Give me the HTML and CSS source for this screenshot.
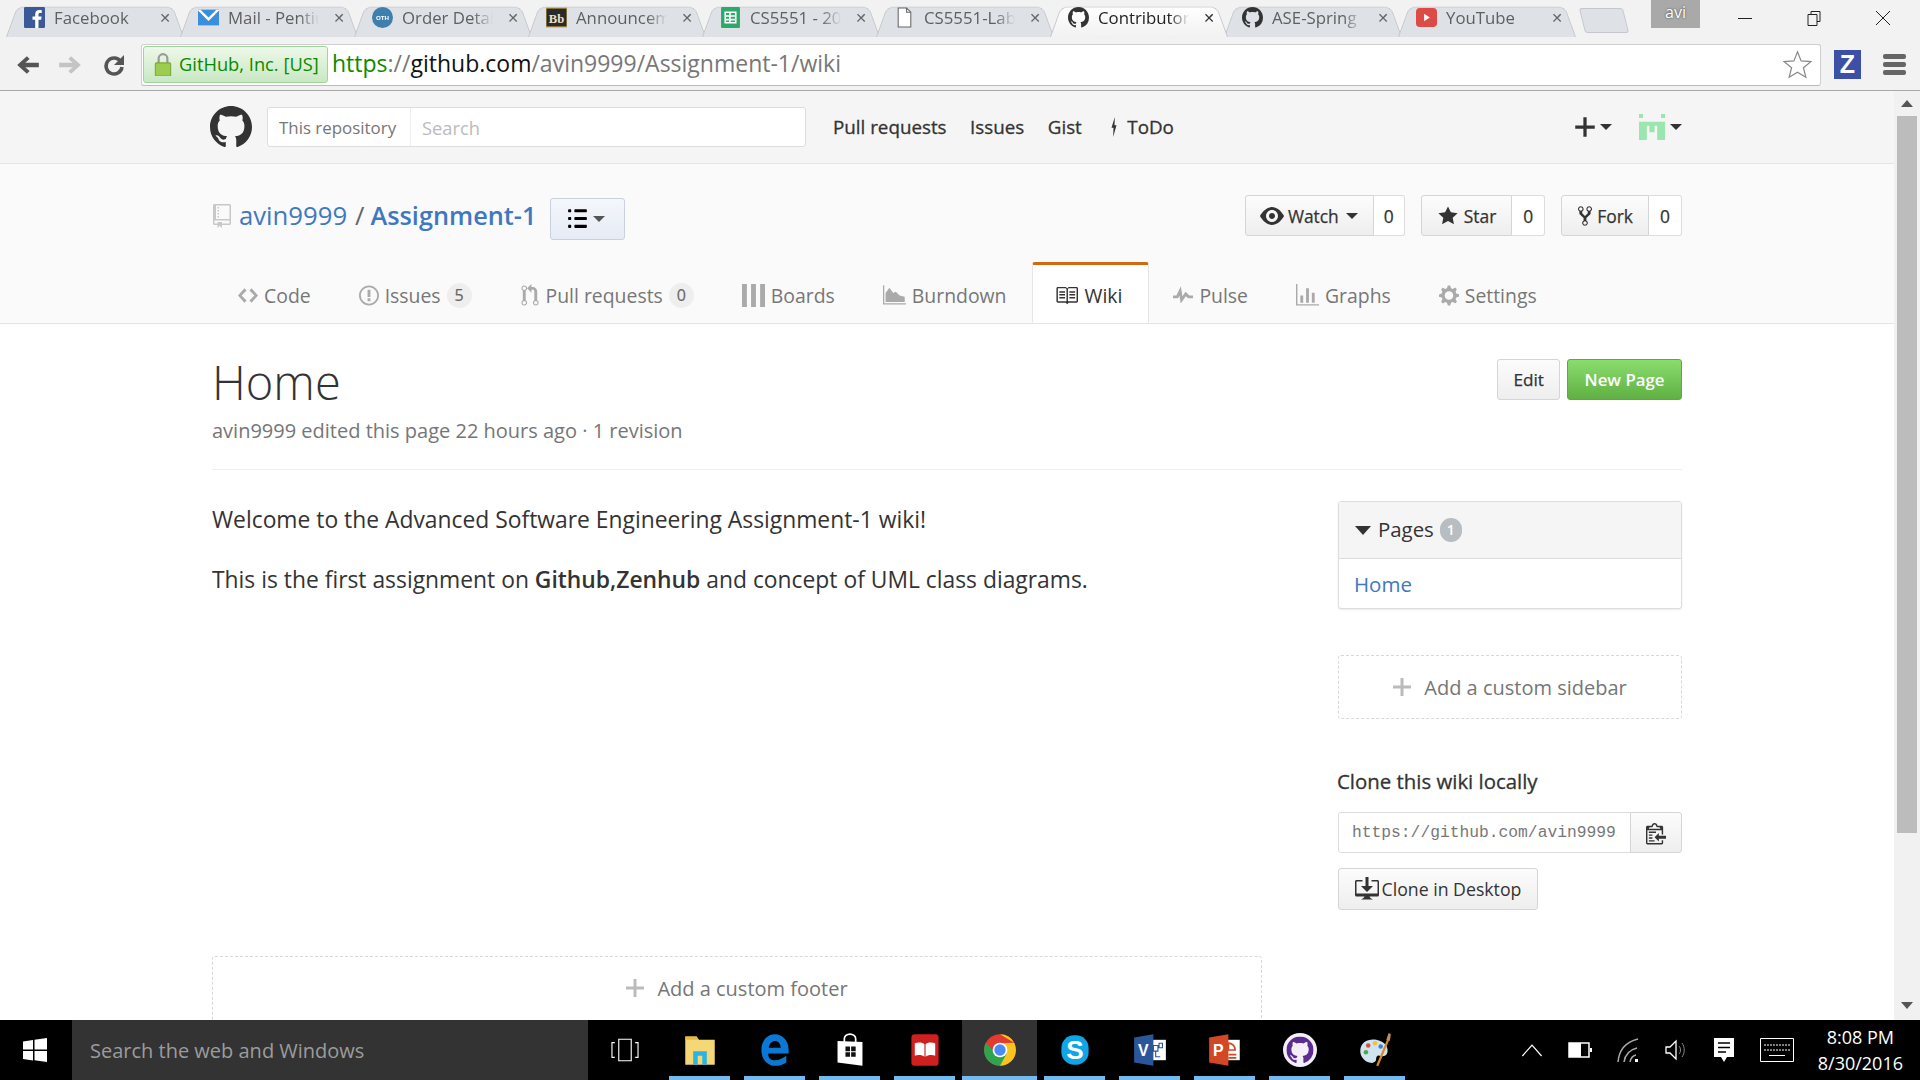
FILE: index.html
```html
<!DOCTYPE html>
<html lang="en">
<head>
<meta charset="utf-8">
<title>Home · avin9999/Assignment-1 Wiki</title>
<link rel="stylesheet" href="styles.css">
</head>
<body>
<svg class="defs" aria-hidden="true">
  <symbol id="i-mark" viewBox="0 0 16 16"><path d="M8 0C3.58 0 0 3.58 0 8c0 3.54 2.29 6.53 5.47 7.59.4.07.55-.17.55-.38 0-.19-.01-.82-.01-1.49-2.01.37-2.53-.49-2.69-.94-.09-.23-.48-.94-.82-1.13-.28-.15-.68-.52-.01-.53.63-.01 1.08.58 1.23.82.72 1.21 1.87.87 2.33.66.07-.52.28-.87.51-1.07-1.78-.2-3.64-.89-3.64-3.95 0-.87.31-1.59.82-2.15-.08-.2-.36-1.02.08-2.12 0 0 .67-.21 2.2.82.64-.18 1.32-.27 2-.27.68 0 1.36.09 2 .27 1.53-1.04 2.2-.82 2.2-.82.44 1.1.16 1.92.08 2.12.51.56.82 1.27.82 2.15 0 3.07-1.87 3.75-3.65 3.95.29.25.54.73.54 1.48 0 1.07-.01 1.93-.01 2.2 0 .21.15.46.55.38A8.013 8.013 0 0016 8c0-4.42-3.58-8-8-8z"/></symbol>
  <symbol id="i-star" viewBox="0 0 14 16"><path d="M14 6l-4.9-.64L7 1 4.9 5.36 0 6l3.6 3.26L2.67 14 7 11.67 11.33 14l-.93-4.74L14 6z"/></symbol>
  <symbol id="i-eye" viewBox="0 0 16 16"><path d="M8.06 2C3 2 0 8 0 8s3 6 8.06 6C13 14 16 8 16 8s-3-6-7.94-6zM8 12c-2.2 0-4-1.78-4-4 0-2.2 1.8-4 4-4 2.22 0 4 1.8 4 4 0 2.22-1.78 4-4 4zm2-4c0 1.11-.89 2-2 2-1.11 0-2-.89-2-2 0-1.11.89-2 2-2 1.11 0 2 .89 2 2z"/></symbol>
  <symbol id="i-fork" viewBox="0 0 10 16"><path d="M8 1a1.993 1.993 0 00-1 3.72V6L5 8 3 6V4.72A1.993 1.993 0 002 1a1.993 1.993 0 00-1 3.72V6.5l3 3v1.78A1.993 1.993 0 005 15a1.993 1.993 0 001-3.72V9.5l3-3V4.72A1.993 1.993 0 008 1zM2 4.2C1.34 4.2.8 3.65.8 3c0-.65.55-1.2 1.2-1.2.65 0 1.2.55 1.2 1.2 0 .65-.55 1.2-1.2 1.2zm3 10c-.66 0-1.2-.55-1.2-1.2 0-.65.55-1.2 1.2-1.2.65 0 1.2.55 1.2 1.2 0 .65-.55 1.2-1.2 1.2zm3-10c-.66 0-1.2-.55-1.2-1.2 0-.65.55-1.2 1.2-1.2.65 0 1.2.55 1.2 1.2 0 .65-.55 1.2-1.2 1.2z"/></symbol>
  <symbol id="i-repo" viewBox="0 0 12 16"><path d="M4 9H3V8h1v1zm0-3H3v1h1V6zm0-2H3v1h1V4zm0-2H3v1h1V2zm8-1v12c0 .55-.45 1-1 1H6v2l-1.5-1.5L3 16v-2H1c-.55 0-1-.45-1-1V1c0-.55.45-1 1-1h10c.55 0 1 .45 1 1zm-1 10H1v2h2v-1h3v1h5v-2zm0-10H2v9h9V1z"/></symbol>
  <symbol id="i-code" viewBox="0 0 14 16"><path d="M9.5 3L8 4.5 11.5 8 8 11.5 9.5 13 14 8 9.5 3zm-5 0L0 8l4.5 5L6 11.5 2.5 8 6 4.5 4.5 3z"/></symbol>
  <symbol id="i-issue" viewBox="0 0 14 16"><path d="M7 2.3c3.14 0 5.7 2.56 5.7 5.7s-2.56 5.7-5.7 5.7A5.71 5.71 0 011.3 8c0-3.14 2.56-5.7 5.7-5.7zM7 1C3.14 1 0 4.14 0 8s3.14 7 7 7 7-3.14 7-7-3.14-7-7-7zm1 3H6v5h2V4zm0 6H6v2h2v-2z"/></symbol>
  <symbol id="i-pr" viewBox="0 0 12 16"><path d="M11 11.28V5c-.03-.78-.34-1.47-.94-2.06C9.46 2.35 8.78 2.03 8 2H7V0L4 3l3 3V4h1c.27.02.48.11.69.31.21.2.3.42.31.69v6.28A1.993 1.993 0 0010 15a1.993 1.993 0 001-3.72zm-1 2.92c-.66 0-1.2-.55-1.2-1.2 0-.65.55-1.2 1.2-1.2.65 0 1.2.55 1.2 1.2 0 .65-.55 1.2-1.2 1.2zM4 3c0-1.11-.89-2-2-2a1.993 1.993 0 00-1 3.72v6.56A1.993 1.993 0 002 15a1.993 1.993 0 001-3.72V4.72c.59-.34 1-.98 1-1.72zm-.8 10c0 .66-.55 1.2-1.2 1.2-.65 0-1.2-.55-1.2-1.2 0-.65.55-1.2 1.2-1.2.65 0 1.2.55 1.2 1.2zM2 4.2C1.34 4.2.8 3.65.8 3c0-.65.55-1.2 1.2-1.2.65 0 1.2.55 1.2 1.2 0 .65-.55 1.2-1.2 1.2z"/></symbol>
  <symbol id="i-boards" viewBox="0 0 16 16"><path d="M0 0h3.4v16H0zM6.3 0h3.4v16H6.3zM12.6 0H16v16h-3.4z"/></symbol>
  <symbol id="i-burn" viewBox="0 0 18 16"><path d="M0 0h1v14h17v1H0z"/><path d="M2 13V6l3-4 3 4 2-1 3 3 4 1v4z"/></symbol>
  <symbol id="i-book" viewBox="0 0 16 16"><path d="M3 5h4v1H3V5zm0 3h4V7H3v1zm0 2h4V9H3v1zm11-5h-4v1h4V5zm0 2h-4v1h4V7zm0 2h-4v1h4V9zm2-6v9c0 .55-.45 1-1 1H9.5l-1 1-1-1H2c-.55 0-1-.45-1-1V3c0-.55.45-1 1-1h5.5l1 1 1-1H15c.55 0 1 .45 1 1zm-8 .5L7.5 3H2v9h6V3.5zm7-.5H9.5l-.5.5V12h6V3z"/></symbol>
  <symbol id="i-pulse" viewBox="0 0 14 16"><path d="M11.5 8L8.8 5.4 6.6 8.5 5.5 1.6 2.38 8H0v2h3.6l.9-1.8.9 5.4L9 8.5l1.6 1.5H14V8h-2.5z"/></symbol>
  <symbol id="i-graph" viewBox="0 0 16 16"><path d="M16 14v1H0V0h1v14h15zM5 13H3V8h2v5zm4 0H7V3h2v10zm4 0h-2V6h2v7z"/></symbol>
  <symbol id="i-gear" viewBox="0 0 14 16"><path d="M14 8.77v-1.6l-1.94-.64-.45-1.09.88-1.84-1.13-1.13-1.81.91-1.09-.45-.69-1.92h-1.6l-.63 1.94-1.11.45-1.84-.88-1.13 1.13.91 1.81-.45 1.09L0 7.23v1.59l1.94.64.45 1.09-.88 1.84 1.13 1.13 1.81-.91 1.09.45.69 1.92h1.59l.63-1.94 1.11-.45 1.84.88 1.13-1.13-.92-1.81.47-1.09L14 8.75v.02zM7 11c-1.66 0-3-1.34-3-3s1.34-3 3-3 3 1.34 3 3-1.34 3-3 3z"/></symbol>
  <symbol id="i-desk" viewBox="0 0 16 16"><path d="M4 6h3V0h2v6h3l-4 4-4-4zm11-4h-4v1h4v8H1V3h4V2H1c-.55 0-1 .45-1 1v9c0 .55.45 1 1 1h5.34c-.25.61-.86 1.39-2.34 2h8c-1.48-.61-2.09-1.39-2.34-2H15c.55 0 1-.45 1-1V3c0-.55-.45-1-1-1z"/></symbol>
  <symbol id="i-clip" viewBox="0 0 14 16"><path d="M2 13h4v1H2v-1zm5-6H2v1h5V7zm2 3V8l-3 3 3 3v-2h5v-2H9zM4.5 9H2v1h2.5V9zM2 12h2.5v-1H2v1zm9 1h1v2c-.02.28-.11.52-.3.7-.19.18-.42.28-.7.3H1c-.55 0-1-.45-1-1V4c0-.55.45-1 1-1h3c0-1.11.89-2 2-2 1.11 0 2 .89 2 2h3c.55 0 1 .45 1 1v5h-1V6H1v9h10v-2zM2 5h8c0-.55-.45-1-1-1H8c-.55 0-1-.45-1-1s-.45-1-1-1-1 .45-1 1-.45 1-1 1H3c-.55 0-1 .45-1 1z"/></symbol>
  <symbol id="i-plus" viewBox="0 0 12 16"><path d="M12 9H7v5H5V9H0V7h5V2h2v5h5v2z"/></symbol>
  <symbol id="i-list" viewBox="0 0 12 16"><path d="M2 13c0 .59 0 1-.59 1H.59C0 14 0 13.59 0 13c0-.59 0-1 .59-1h.81c.59 0 .59.41.59 1H2zm2.59-9h6.81c.59 0 .59-.41.59-1 0-.59 0-1-.59-1H4.59C4 2 4 2.41 4 3c0 .59 0 1 .59 1zM1.41 7H.59C0 7 0 7.41 0 8c0 .59 0 1 .59 1h.81c.59 0 .59-.41.59-1 0-.59 0-1-.59-1h.01zm0-5H.59C0 2 0 2.41 0 3c0 .59 0 1 .59 1h.81c.59 0 .59-.41.59-1 0-.59 0-1-.59-1h.01zm10 5H4.59C4 7 4 7.41 4 8c0 .59 0 1 .59 1h6.81c.59 0 .59-.41.59-1 0-.59 0-1-.59-1h.01zm0 5H4.59C4 12 4 12.41 4 13c0 .59 0 1 .59 1h6.81c.59 0 .59-.41.59-1 0-.59 0-1-.59-1h.01z"/></symbol>
  <symbol id="i-bolt" viewBox="0 0 8 24"><path d="M5 0L1 13h2.4L3 24l4-14H4.6z"/></symbol>
</svg>

<div class="strip">
  <div class="tab">
    <svg class="favicon" viewBox="0 0 18 18"><rect width="18" height="18" rx="1" fill="#3b5998"/><path fill="#fff" d="M12.4 18v-7h2.3l.4-2.8h-2.7V6.5c0-.8.2-1.3 1.4-1.3h1.4V2.7c-.3 0-1.1-.1-2.1-.1-2.1 0-3.5 1.3-3.5 3.6v2H7.300v2.800h2.300v7z"/></svg>
    <span class="tab-title">Facebook</span><span class="tab-x">✕</span>
  </div>
  <div class="tab">
    <svg class="favicon" viewBox="0 0 24 18"><rect width="24" height="18" fill="#3a8fdc"/><path fill="#fff" d="M0 0h3l9 9 9-9h3v1L12 13 0 1z"/></svg>
    <span class="tab-title">Mail - Pentium</span><span class="tab-x">✕</span>
  </div>
  <div class="tab">
    <svg class="favicon" viewBox="0 0 22 22"><circle cx="11" cy="11" r="11" fill="#3f7fae"/><text x="11" y="13.500" font-size="6.500" font-weight="700" text-anchor="middle" fill="#fff" font-family="Liberation Sans">OTH</text></svg>
    <span class="tab-title">Order Details</span><span class="tab-x">✕</span>
  </div>
  <div class="tab">
    <svg class="favicon" viewBox="0 0 20 18"><rect width="20" height="18" fill="#2a2a2a" stroke="#c7a34a"/><text x="10" y="14" font-size="12" font-weight="700" text-anchor="middle" fill="#e8e0c8" font-family="Liberation Serif">Bb</text></svg>
    <span class="tab-title">Announcements</span><span class="tab-x">✕</span>
  </div>
  <div class="tab">
    <svg class="favicon" viewBox="0 0 18 20"><rect width="18" height="20" rx="1" fill="#2fa86c"/><path fill="none" stroke="#fff" stroke-width="1.500" d="M4 5h10v10H4zM4 8.500h10M4 12h10M8.500 5v10"/></svg>
    <span class="tab-title">CS5551 - 2016</span><span class="tab-x">✕</span>
  </div>
  <div class="tab">
    <svg class="favicon" viewBox="0 0 16 20"><path fill="#fff" stroke="#666" d="M2 1h8l4 4v14H2z"/><path fill="none" stroke="#666" d="M10 1v4h4"/></svg>
    <span class="tab-title">CS5551-Lab</span><span class="tab-x">✕</span>
  </div>
  <div class="tab tab-active">
    <svg class="favicon favicon-mark"><use href="#i-mark"/></svg>
    <span class="tab-title">Contributors</span><span class="tab-x">✕</span>
  </div>
  <div class="tab">
    <svg class="favicon favicon-mark"><use href="#i-mark"/></svg>
    <span class="tab-title">ASE-Spring</span><span class="tab-x">✕</span>
  </div>
  <div class="tab">
    <svg class="favicon" viewBox="0 0 22 20"><rect width="22" height="20" rx="4" fill="#dd4b47"/><path fill="#fff" d="M8.500 6v8l6-4z"/></svg>
    <span class="tab-title">YouTube</span><span class="tab-x">✕</span>
  </div>
  <div class="new-tab"></div>
  <div class="win-controls">
    <span class="user-chip">avi</span>
    <span class="win-btn"><svg class="win-ico" viewBox="0 0 16 16"><path stroke="#222" d="M1 8.500h14"/></svg></span>
    <span class="win-btn"><svg class="win-ico" viewBox="0 0 16 16"><path fill="none" stroke="#222" d="M2 4.500h9v11H2zM5 4V1.500h9v10h-3"/></svg></span>
    <span class="win-btn"><svg class="win-ico" viewBox="0 0 16 16"><path stroke="#222" d="M1 1l14 14M15 1L1 15"/></svg></span>
  </div>
</div>

<div class="toolbar">
  <svg class="nav-arrow" viewBox="0 0 24 24"><path fill="#555" d="M11 4l2.500 2.500L9.500 10H22v4H9.500l4 3.500L11 20 2 12z"/></svg>
  <svg class="nav-arrow" viewBox="0 0 24 24"><path fill="#c4c4c4" d="M13 4l-2.500 2.500 4 3.500H2v4h12.500l-4 3.500L13 20l9-8z"/></svg>
  <svg class="nav-reload" viewBox="0 0 24 24"><path fill="none" stroke="#555" stroke-width="3.500" d="M19 9a8 8 0 1 0 1 5"/><path fill="#555" d="M22 2v10H12z"/></svg>
  <div class="omnibox">
    <div class="ev-badge">
      <svg class="lock" viewBox="0 0 16 22"><path fill="none" stroke="#9a9a9a" stroke-width="2" d="M4 10V6a4 4 0 0 1 8 0v4"/><rect x="1" y="10" width="14" height="12" rx="1" fill="#9ccc50" stroke="#7da83a"/></svg>
      <span>GitHub, Inc. [US]</span>
    </div>
    <div class="url"><span class="url-scheme">https</span><span class="url-dim">://</span><span class="url-host">github.com</span><span class="url-dim">/avin9999/Assignment-1/wiki</span></div>
    <svg class="omni-star" viewBox="0 0 24 24"><path fill="#fff" stroke="#888" d="M12 1.500l3 7.500 8 .6-6.100 5.100 2 7.800L12 18.300l-6.900 4.200 2-7.800L1 9.600 9 9z"/></svg>
  </div>
  <div class="ext-z">Z</div>
  <div class="hamburger"><i></i><i></i><i></i></div>
</div>

<div class="viewport">
  <div class="page">
    <header class="gh-head">
      <div class="wrap gh-head-row">
        <svg class="gh-logo"><use href="#i-mark"/></svg>
        <div class="search">
          <span class="search-scope">This repository</span>
          <span class="search-input">Search</span>
        </div>
        <nav class="gh-nav">
          <a>Pull requests</a><a>Issues</a><a>Gist</a>
          <a class="gh-todo"><svg class="bolt"><use href="#i-bolt"/></svg>ToDo</a>
        </nav>
        <div class="gh-user">
          <span class="gh-user-item"><svg class="plus-ico"><use href="#i-plus"/></svg><i class="caret"></i></span>
          <span class="gh-user-item">
            <svg class="avatar" viewBox="0 0 10 10"><path fill="#9be5ae" d="M0 0h1.500v1.500H0zM8.500 0H10v1.500H8.500zM0 3h10v1.500H0zM0 3h3v7H0zM7 3h3v7H7zM4 3h2v4H4z"/></svg>
            <i class="caret"></i>
          </span>
        </div>
      </div>
    </header>

    <section class="repo-head">
      <div class="wrap">
        <div class="repo-top">
          <div class="repo-title">
            <svg class="repo-ico"><use href="#i-repo"/></svg>
            <a class="link">avin9999</a><span class="slash">/</span><a class="link repo-name">Assignment-1</a>
            <span class="list-btn"><svg class="list-ico"><use href="#i-list"/></svg><i class="caret caret-grey"></i></span>
          </div>
          <div class="repo-actions">
            <div class="btn-group"><span class="act act-watch"><svg class="act-ico act-eye"><use href="#i-eye"/></svg>Watch<i class="caret"></i></span><span class="count count-watch">0</span></div>
            <div class="btn-group"><span class="act"><svg class="act-ico"><use href="#i-star"/></svg>Star</span><span class="count">0</span></div>
            <div class="btn-group"><span class="act act-forkbtn"><svg class="act-ico act-fork"><use href="#i-fork"/></svg>Fork</span><span class="count">0</span></div>
          </div>
        </div>
        <nav class="rtabs">
          <a class="rtab"><svg class="rt-ico"><use href="#i-code"/></svg>Code</a>
          <a class="rtab"><svg class="rt-ico"><use href="#i-issue"/></svg>Issues<span class="counter">5</span></a>
          <a class="rtab"><svg class="rt-ico"><use href="#i-pr"/></svg>Pull requests<span class="counter">0</span></a>
          <a class="rtab"><svg class="rt-ico rt-wide"><use href="#i-boards"/></svg>Boards</a>
          <a class="rtab"><svg class="rt-ico rt-wide"><use href="#i-burn"/></svg>Burndown</a>
          <a class="rtab rtab-on"><svg class="rt-ico rt-wide"><use href="#i-book"/></svg>Wiki</a>
          <a class="rtab"><svg class="rt-ico"><use href="#i-pulse"/></svg>Pulse</a>
          <a class="rtab"><svg class="rt-ico rt-wide"><use href="#i-graph"/></svg>Graphs</a>
          <a class="rtab"><svg class="rt-ico"><use href="#i-gear"/></svg>Settings</a>
        </nav>
      </div>
    </section>

    <main class="wrap wiki">
      <div class="wiki-head">
        <div>
          <h1 class="wiki-title">Home</h1>
          <div class="wiki-meta">avin9999 edited this page 22 hours ago · 1 revision</div>
        </div>
        <div class="wiki-actions">
          <span class="btn">Edit</span>
          <span class="btn btn-green">New Page</span>
        </div>
      </div>
      <div class="wiki-grid">
        <article class="wiki-body">
          <p>Welcome to the Advanced Software Engineering Assignment-1 wiki!</p>
          <p>This is the first assignment on <strong>Github,Zenhub</strong> and concept of UML class diagrams.</p>
        </article>
        <aside class="wiki-side">
          <div class="pages-box">
            <div class="pages-head"><i class="caret caret-big"></i>Pages<span class="pages-num">1</span></div>
            <div class="pages-item"><a class="link">Home</a></div>
          </div>
          <div class="dashed dashed-side"><svg class="add-ico"><use href="#i-plus"/></svg>Add a custom sidebar</div>
          <h3 class="clone-title">Clone this wiki locally</h3>
          <div class="clone-field">
            <span class="clone-url"><span class="clone-text">https://github.com/avin9999/Assignment-1.wiki.git</span></span>
            <span class="clone-copy"><svg class="clip-ico"><use href="#i-clip"/></svg></span>
          </div>
          <span class="btn btn-desktop"><svg class="desk-ico"><use href="#i-desk"/></svg>Clone in Desktop</span>
        </aside>
      </div>
      <div class="dashed dashed-foot"><svg class="add-ico"><use href="#i-plus"/></svg>Add a custom footer</div>
    </main>
  </div>
  <div class="scrollbar">
    <i class="sb-up"></i>
    <i class="sb-thumb"></i>
    <i class="sb-down"></i>
  </div>
</div>

<footer class="taskbar">
  <div class="start">
    <svg class="start-ico" viewBox="0 0 24 24"><path fill="#fff" d="M0 3.500l10-1.500v9.500H0zM11.500 1.800L24 0v11.500H11.500zM0 13h10v9.500L0 21zM11.500 13H24v11l-12.500-1.800z"/></svg>
  </div>
  <div class="cortana">Search the web and Windows</div>
  <div class="tb-apps">
    <span class="tb-app"><svg class="tb-ico" viewBox="0 0 30 30"><path fill="none" stroke="#fff" d="M9.500 5.500h11v19h-11zM6 8.500H3.500v13H6M24 8.500h2.500v13H24"/></svg></span>
    <span class="tb-app tb-open"><svg class="tb-ico" viewBox="0 0 30 30"><path fill="#f6d776" d="M2 3h10l2 3h14v22H2z"/><path fill="#e8b93f" d="M2 3h10l2 3H2z"/><path fill="#2ab4e6" d="M9 16h12v12h-4v-8h-4v8H9z"/></svg></span>
    <span class="tb-app tb-open"><svg class="tb-ico" viewBox="0 0 30 30"><path fill="#0a78d4" d="M15 1C7 1 3 8 3 15c0 9 6 14 12 14 4 0 7-1 10-3v-6c-3 2-6 4-10 4s-6-2-6-6h18v-3C27 7 22 1 15 1zM9.500 13c.5-4 3-6 5.500-6s5 2 5 6z"/></svg></span>
    <span class="tb-app tb-open"><svg class="tb-ico" viewBox="0 0 30 30"><path fill="none" stroke="#fff" stroke-width="1.500" d="M10 8V5a5 4 0 0 1 10 0v3"/><path fill="#fff" d="M4 7l22 1v21L4 26z"/><path fill="#111" d="M11 12h4v4h-4zM16 12h4v4h-4zM11 17h4v4h-4zM16 17h4v4h-4z"/></svg></span>
    <span class="tb-app tb-open"><svg class="tb-ico" viewBox="0 0 30 30"><rect x="3" y="1" width="24" height="28" rx="3" fill="#cf1f1f"/><path fill="#fff" d="M6 9c3-1 7-1 8.500 1v11C13 19.500 9 19 6 20zM24 9c-3-1-7-1-8.500 1v11c1.500-1.500 5.500-2 8.500-1z"/></svg></span>
    <span class="tb-app tb-open tb-active"><svg class="tb-ico" viewBox="0 0 30 30"><circle cx="15" cy="15" r="14" fill="#e33b2e"/><path fill="#f7c51e" d="M15 1a14 14 0 0 1 12.500 7.500L15 9l-3 1 3 19A14 14 0 0 0 27.500 8.500z"/><path fill="#2fa44f" d="M2.500 8.500A14 14 0 0 0 15 29l6-11-10 0z"/><circle cx="15" cy="15" r="6.500" fill="#fff"/><circle cx="15" cy="15" r="5" fill="#4a8af4"/></svg></span>
    <span class="tb-app tb-open"><svg class="tb-ico" viewBox="0 0 30 30"><rect x="3" y="2" width="24" height="26" rx="11" fill="#10a5e6"/><text x="15" y="23" font-size="23" font-weight="700" text-anchor="middle" fill="#fff" font-family="Liberation Sans">S</text></svg></span>
    <span class="tb-app tb-open"><svg class="tb-ico" viewBox="0 0 30 30"><path fill="#fff" d="M16 6h13v18H16z"/><path fill="none" stroke="#2b579a" d="M18 11h4v5h-4zM23 9h3v4h-3zM20 16v5h4"/><path fill="#2b579a" d="M1 4l17-3v28L1 26z"/><text x="9" y="20" font-size="14" font-weight="700" text-anchor="middle" fill="#fff" font-family="Liberation Sans">V</text></svg></span>
    <span class="tb-app tb-open"><svg class="tb-ico" viewBox="0 0 30 30"><path fill="#fff" d="M15 6h13v18H15z"/><path fill="none" stroke="#d24726" stroke-width="1.500" d="M18 9v6h6a6 6 0 0 0-6-6zM18 19h7M18 22h7"/><path fill="#d24726" d="M1 4l17-3v28L1 26z"/><text x="9" y="20" font-size="14" font-weight="700" text-anchor="middle" fill="#fff" font-family="Liberation Sans">P</text></svg></span>
    <span class="tb-app tb-open"><svg class="tb-ico" viewBox="-2 -2 20 20"><circle cx="8" cy="8" r="10" fill="#f3eef8"/><use href="#i-mark" width="16" height="16" fill="#5c2d91"/></svg></span>
    <span class="tb-app tb-open"><svg class="tb-ico" viewBox="0 0 30 30"><path fill="#cfe4ef" d="M2 16C2 8 9 5 16 6c7 1 11 6 10 11-1 4-5 4-7 3-2-.6-3 1-3 3 0 3-3 4-6 3-4-1-8-5-8-10z"/><circle cx="9" cy="11" r="2" fill="#e04b3f"/><circle cx="15" cy="9" r="2" fill="#f2c230"/><circle cx="7" cy="17" r="2" fill="#4aa84f"/><circle cx="20" cy="12" r="2" fill="#3f7fd1"/><path stroke="#d98a24" stroke-width="2" d="M17 29l10-24"/><path fill="#b9935a" d="M25 6l2-6 2 1-1 6z"/></svg></span>
  </div>
  <div class="tray">
    <svg class="tray-ico tray-chev" viewBox="0 0 20 20"><path fill="none" stroke="#fff" d="M2 15l8-9 8 9"/></svg>
    <svg class="tray-ico" viewBox="0 0 24 20"><path fill="none" stroke="#fff" stroke-width="1.500" d="M1 3h20v14H1z"/><path fill="#fff" d="M1 3h12v14H1zM22 8h2v4h-2z"/></svg>
    <svg class="tray-ico" viewBox="0 0 24 24"><path fill="none" stroke="#aaa" stroke-width="1.500" d="M2 24C3 12 10 4 22 1M8 24c1-7 5-12 13-14M14 24c.5-3 2-6 6-7"/><path fill="#fff" d="M19 21h3v3h-3z"/></svg>
    <svg class="tray-ico" viewBox="0 0 24 24"><path fill="none" stroke="#fff" stroke-width="1.300" d="M2 9h4l6-6v18l-6-6H2z"/><path fill="none" stroke="#888" d="M15 8c2 2 2 6 0 8M18 5c3 4 3 10 0 14"/></svg>
    <svg class="tray-ico" viewBox="0 0 24 24"><path fill="#fff" d="M2 0h20v19h-7l-3 5-3-5H2z"/><path stroke="#000" stroke-width="1.500" d="M6 5h12M6 9.500h12M6 14h8"/></svg>
    <svg class="tray-ico tray-kb" viewBox="0 0 34 24"><path fill="none" stroke="#fff" d="M.5.500h33v23H.5z"/><path stroke="#fff" stroke-dasharray="2 1" d="M4 7h26M4 12h26"/><path stroke="#fff" d="M9 17.500h16"/></svg>
    <div class="clock"><span>8:08 PM</span><span>8/30/2016</span></div>
  </div>
</footer>
</body>
</html>
```

FILE: styles.css
```css
* { box-sizing: border-box; }
html, body { margin: 0; height: 1080px; overflow: hidden; }
body { display: flex; flex-direction: column; font-family: "Open Sans", "Noto Sans", sans-serif; color: #333; background: #fff; }
.defs { display: none; }
a { color: inherit; text-decoration: none; }

/* browser tab strip */
.strip { display: flex; flex: none; height: 37px; background: #f2f2f2; padding-left: 8px; position: relative; z-index: 1; }
.tab { position: relative; flex: none; width: 174px; height: 37px; display: flex; align-items: center; padding: 0 9px 2px 16px; font-size: 16.800px; color: #5f5f5f; }
.tab::before { content: ""; position: absolute; left: -2px; right: -2px; top: 1px; bottom: 0; background: #dee1e6; border: 1px solid #c4c7cc; border-bottom: 0; border-radius: 8px 8px 0 0; transform: perspective(70px) rotateX(16deg); transform-origin: bottom; }
.tab > * { position: relative; }
.tab-active { color: #222; z-index: 2; }
.tab-active::before { background: linear-gradient(#fff, #f2f2f2); }
.favicon { flex: none; width: 21px; height: 21px; margin-right: 9px; }
.favicon-mark { fill: #333; }
.tab-title { flex: 1; min-width: 0; overflow: hidden; white-space: nowrap; -webkit-mask-image: linear-gradient(90deg, #000 75%, transparent 96%); mask-image: linear-gradient(90deg, #000 75%, transparent 96%); }
.tab-x { flex: none; width: 16px; margin-left: 8px; font-size: 14px; color: #666; text-align: center; font-family: "DejaVu Sans", sans-serif; }
.tab-active .tab-x { color: #333; }
.new-tab { flex: none; width: 44px; height: 25px; margin: 8px 0 0 8px; background: #dee1e6; border: 1px solid #c4c8ce; border-radius: 3px; transform: skewX(14deg); }
.win-controls { flex: none; display: flex; margin-left: auto; height: 34px; padding-right: 3px; }
.user-chip { width: 49px; height: 28px; margin-right: 10px; background: #a9a9a9; color: #fff; font-size: 16px; text-align: center; line-height: 24px; text-shadow: 0 0 2px #333; }
.win-btn { width: 69px; display: flex; align-items: center; justify-content: center; height: 36px; }
.win-ico { width: 16px; height: 16px; }

/* toolbar */
.toolbar { flex: none; height: 53px; display: flex; align-items: center; background: #f2f2f2; padding: 2px 0 0 15px; }
.nav-arrow { flex: none; width: 26px; height: 26px; margin-right: 16px; }
.nav-reload { flex: none; width: 24px; height: 24px; margin: 0 15px 0 3px; }
.omnibox { flex: none; width: 1680px; height: 42px; background: #fff; border: 1px solid #cfcfcf; border-bottom-color: #bbb; border-radius: 3px; display: flex; align-items: center; }
.ev-badge { flex: none; width: 185px; height: 37px; margin-left: 1px; display: flex; align-items: center; gap: 7px; padding: 0 0 2px 10px; color: #0b8a00; font-size: 18.300px; white-space: nowrap; background: linear-gradient(#eef8e9, #c8e8c2); border: 1px solid #9fd49a; border-radius: 3px; }
.lock { flex: none; width: 18px; height: 24px; }
.url { margin: -4px 0 0 4px; font-size: 23px; color: #777; white-space: nowrap; flex: 1; }
.url-scheme { color: #0a8a00; }
.url-host { color: #111; }
.omni-star { flex: none; width: 29px; height: 29px; margin-right: 8px; }
.ext-z { flex: none; width: 27px; height: 29px; margin-left: 13px; background: #3c50a5; color: #fff; font: 700 25px/29px "Liberation Sans", sans-serif; text-align: center; }
.hamburger { flex: none; display: flex; flex-direction: column; gap: 3px; margin-left: 22px; }
.hamburger i { display: block; width: 23px; height: 5px; border-radius: 2px; background: #666; }

/* viewport */
.viewport { flex: 1; min-height: 0; display: flex; border-top: 1px solid #a9a9a9; }
.page { flex: 1; min-width: 0; overflow: hidden; background: #fff; }
.scrollbar { flex: none; width: 26px; background: #f1f1f1; display: flex; flex-direction: column; align-items: center; padding-top: 9px; }
.sb-up { width: 0; height: 0; border: 6px solid transparent; border-top: 0; border-bottom: 7px solid #555; }
.sb-thumb { width: 20px; height: 717px; margin-top: 9px; background: #bcbcbc; }
.sb-down { width: 0; height: 0; margin-top: auto; margin-bottom: 11px; border: 6px solid transparent; border-bottom: 0; border-top: 7px solid #555; }
.wrap { width: 1470px; margin-left: 212px; }

/* github header */
.gh-head { height: 73px; background: #f5f5f5; border-bottom: 1px solid #e5e5e5; }
.gh-head-row { display: flex; align-items: center; height: 72px; }
.gh-logo { flex: none; width: 42px; height: 42px; margin: 0 15px 0 -2px; fill: #333; }
.search { flex: none; width: 539px; height: 40px; background: #fff; border: 1px solid #ddd; border-radius: 3px; display: flex; align-items: center; }
.search-scope { flex: none; width: 143px; height: 100%; display: flex; align-items: center; padding-left: 11px; font-size: 16.900px; color: #767676; border-right: 1px solid #eee; white-space: nowrap; }
.search-input { padding-left: 11px; font-size: 18.300px; color: #bbb; }
.gh-nav { flex: none; display: flex; gap: 23.500px; margin-left: 27px; font-size: 18.800px; color: #333; white-space: nowrap; -webkit-text-stroke: .3px #333; }
.gh-todo { display: flex; align-items: center; gap: 9px; }
.bolt { width: 8px; height: 20px; fill: #333; margin-left: 5px; }
.gh-user { display: flex; align-items: center; margin-left: auto; gap: 27px; }
.gh-user-item { display: flex; align-items: center; gap: 2px; }
.plus-ico { width: 20px; height: 26px; fill: #333; }
.avatar { width: 26px; height: 26px; }
.caret { display: inline-block; width: 0; height: 0; border: 6px solid transparent; border-bottom: 0; border-top: 6px solid #333; margin-left: 3px; }
.caret-grey { border-top-color: #555; margin-left: 6px; }

/* repo header */
.repo-head { height: 160px; background: #fafafa; border-bottom: 1px solid #e5e5e5; }
.repo-head .wrap { height: 100%; display: flex; flex-direction: column; }
.repo-top { flex: none; display: flex; justify-content: space-between; padding-top: 31px; height: 99px; }
.repo-title { display: flex; align-items: center; height: 44px; padding-bottom: 4px; font-size: 25.700px; color: #666; white-space: nowrap; }
.repo-ico { flex: none; width: 18px; height: 24px; fill: #c8c8c8; margin: 1px 8px 0 1px; }
.link { color: #4078c0; }
.slash { margin: 0 6px 0 8px; }
.repo-name { font-weight: 600; font-size: 25.300px; }
.list-btn { display: flex; align-items: center; width: 75px; height: 42px; margin: 7px 0 0 14px; padding-left: 17px; background: linear-gradient(#f4f7fb, #e6ebf5); border: 1px solid #c9d1dc; border-radius: 3px; }
.list-ico { width: 19px; height: 25px; fill: #000; }
.repo-actions { display: flex; gap: 16px; }
.btn-group { display: flex; height: 41px; font-size: 17.400px; }
.act { display: flex; align-items: center; gap: 5px; padding: 0 15px 0 15px; color: #333; -webkit-text-stroke: .25px #333; background: linear-gradient(#fcfcfc, #eee); border: 1px solid #d5d5d5; border-radius: 3px 0 0 3px; white-space: nowrap; }
.act-watch { padding: 0 15px 0 14px; gap: 4px; }
.act-forkbtn { padding: 0 15px 0 16px; }
.act-ico { width: 22px; height: 22px; fill: #333; }
.act-eye { width: 24px; height: 24px; }
.act-fork { width: 14px; height: 24px; }
.count { display: flex; align-items: center; justify-content: center; width: 33px; color: #333; -webkit-text-stroke: .25px #333; background: #fff; border: 1px solid #ddd; border-left: 0; border-radius: 0 3px 3px 0; }
.count-watch { width: 31px; }
.rtabs { flex: 1; display: flex; padding-left: 2px; margin-bottom: -1px; }
.rtab { display: flex; align-items: center; height: 61px; padding: 3px 23px 0; font-size: 19.400px; color: #777; white-space: nowrap; border: 1px solid transparent; border-top-width: 3px; margin-top: -1px; }
.rt-ico { flex: none; width: 20px; height: 23px; margin-right: 6px; fill: #aaa; }
.rt-wide { width: 23px; }
.counter { margin-left: 6px; min-width: 25px; height: 25px; font-size: 16px; line-height: 25px; text-align: center; color: #666; -webkit-text-stroke: .2px #666; background: #eee; border-radius: 13px; }
.rtab-on { margin-left: 2px; padding: 3px 26px 0 22px; color: #333; background: #fff; border-color: #e5e5e5; border-top-color: #d26911; border-bottom-color: #fff; border-radius: 3px 3px 0 0; }
.rtab-on .rt-ico { fill: #333; }

/* wiki */
.wiki-head { display: flex; justify-content: space-between; height: 146px; padding-top: 28px; border-bottom: 1px solid #eee; }
.wiki-title { margin: 0; font-size: 47px; line-height: 60px; font-weight: 300; color: #333; }
.wiki-meta { margin-top: 5px; font-size: 20px; line-height: 28px; color: #767676; white-space: nowrap; }
.wiki-actions { display: flex; gap: 7px; padding-top: 7px; height: 47px; }
.btn { display: inline-flex; align-items: center; justify-content: center; height: 41px; padding: 0 15px; font-size: 17.200px; color: #333; -webkit-text-stroke: .25px #333; white-space: nowrap; background: linear-gradient(#fcfcfc, #eee); border: 1px solid #d5d5d5; border-radius: 3px; }
.btn-green { width: 115px; padding: 0; font-weight: 600; font-size: 16.800px; -webkit-text-stroke: 0; color: #fff; background: linear-gradient(#8add6d, #60b044); border-color: #5ca941; }
.wiki-grid { display: flex; justify-content: space-between; padding-top: 31px; height: 486px; }
.wiki-body { width: 1050px; padding-top: 4px; font-size: 22.850px; line-height: 30px; color: #333; }
.wiki-body p { margin: 0 0 30px; white-space: nowrap; }
.wiki-body strong { font-weight: 600; }
.wiki-side { width: 344px; display: flex; flex-direction: column; align-items: flex-start; }
.pages-box { width: 100%; height: 108px; background: #fff; border: 1px solid #ddd; border-radius: 3px; box-shadow: 0 1px 2px rgba(0,0,0,.08); }
.pages-head { height: 57px; display: flex; align-items: center; padding: 0 0 2px 16px; font-size: 20.400px; color: #333; background: #f5f5f5; border-bottom: 1px solid #ddd; }
.caret-big { border-width: 8px; border-top-width: 9px; margin: 2px 7px 0 0; }
.pages-num { width: 22px; height: 24px; margin: 2px 0 0 6px; border-radius: 11px; background: #b8bdc1; color: #fff; font-size: 14px; font-weight: 600; line-height: 24px; text-align: center; }
.pages-item { padding: 10px 15px; font-size: 20.500px; line-height: 30px; }
.dashed { display: flex; align-items: center; justify-content: center; border: 1px dashed #d8d8d8; border-radius: 3px; font-size: 20px; color: #767676; white-space: nowrap; }
.dashed-side { width: 100%; height: 64px; margin-top: 46px; }
.add-ico { width: 18px; height: 24px; margin-right: 13px; fill: #bbb; }
.clone-title { margin: 47px 0 0 -1px; font-size: 20.400px; line-height: 30px; font-weight: 400; color: #333; -webkit-text-stroke: .3px #333; }
.clone-field { display: flex; width: 100%; height: 41px; margin-top: 16px; }
.clone-url { flex: 1; min-width: 0; padding: 0 13px; background: #fff; border: 1px solid #ddd; border-radius: 3px 0 0 3px; }
.clone-text { display: block; overflow: hidden; font: 16.300px/39px "Liberation Mono", monospace; color: #777; white-space: nowrap; }
.clone-copy { flex: none; width: 52px; display: flex; align-items: center; justify-content: center; margin-left: -1px; background: linear-gradient(#fcfcfc, #eee); border: 1px solid #d5d5d5; border-radius: 0 3px 3px 0; }
.clip-ico { width: 20px; height: 24px; fill: #333; }
.btn-desktop { width: 200px; height: 42px; margin-top: 15px; padding: 0; gap: 3px; -webkit-text-stroke: 0; font-size: 17.700px; }
.desk-ico { width: 24px; height: 24px; fill: #333; }
.dashed-foot { width: 1050px; height: 80px; padding-bottom: 16px; }

/* taskbar */
.taskbar { flex: none; height: 60px; display: flex; align-items: stretch; background: #000; color: #fff; }
.start { flex: none; width: 72px; display: flex; align-items: center; justify-content: center; }
.start-ico { width: 24px; height: 26px; margin-left: -2px; }
.cortana { flex: none; width: 516px; display: flex; align-items: center; padding-left: 18px; font-size: 20px; color: #9c9c9c; background: #333; white-space: nowrap; }
.tb-apps { flex: none; display: flex; margin-left: -1px; }
.tb-app { position: relative; flex: none; width: 75px; display: flex; align-items: center; justify-content: center; }
.tb-open::after { content: ""; position: absolute; left: 7px; right: 7px; bottom: 0; height: 4px; background: #76b9ed; }
.tb-active { background: #333; }
.tb-active::after { left: 0; right: 0; }
.tb-ico { width: 34px; height: 34px; }
.tray { flex: 1; display: flex; align-items: center; justify-content: flex-end; gap: 24px; padding-right: 17px; }
.tray-ico { flex: none; width: 24px; height: 24px; }
.tray-kb { width: 34px; }
.clock { display: flex; flex-direction: column; align-items: center; font-size: 18px; line-height: 26px; white-space: nowrap; }
```
